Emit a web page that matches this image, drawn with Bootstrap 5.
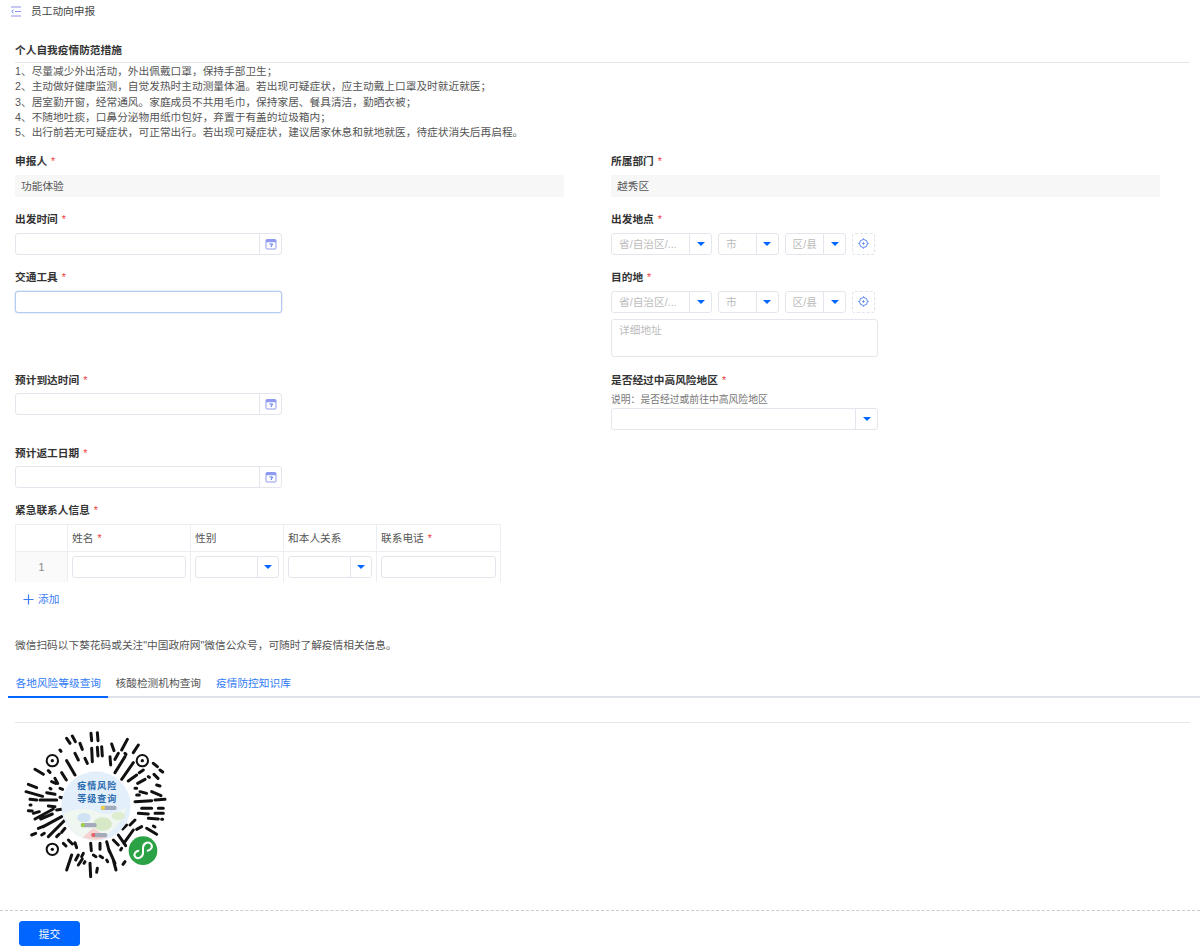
<!DOCTYPE html>
<html lang="zh-CN">
<head>
<meta charset="utf-8">
<title>员工动向申报</title>
<link rel="stylesheet" href="https://cdn.jsdelivr.net/npm/bootstrap@5.3.0/dist/css/bootstrap.min.css">
<style>
html,body{height:946px;overflow:hidden}
body{margin:0;background:#fff;color:#555;font-family:"Liberation Sans","Noto Sans CJK SC",sans-serif;font-size:10.7px;line-height:14px}
.top-bar{height:22px;padding:0 0 0 11px;color:#444;gap:10px}
.sheet{padding:0 10px 0 15px}
.sect-head{margin-top:21px;height:20px;line-height:14px;border-bottom:1px solid #e6e6e6;font-weight:700;color:#333}
.tips{margin:1px 0 0;line-height:15.3px}
.form-grid{width:1192px;margin-top:13.5px}
.fld{margin-bottom:15px}
.lbl{display:block;margin-bottom:7px;color:#333;font-weight:700;height:14px;line-height:15px}
.lbl i{font-style:normal;font-weight:400;color:#ee3f3f;margin-left:4px}
.lbl.tight{margin-bottom:6px}
.read-box{width:549px;height:22px;line-height:23px;padding:0 6px;background:#f7f7f7;color:#555}
.boxed{display:flex;align-items:stretch;height:22px;background:#fff;border:1px solid #e3e6ec;border-radius:3px;overflow:hidden}
.w267{width:267px}
.boxed .fill{flex:1;min-width:0;padding:0 7px;line-height:20px;color:#bbb;white-space:nowrap;overflow:hidden}
.boxed .tail{width:22px;flex:none;border-left:1px solid #e3e6ec;display:flex;align-items:center;justify-content:center}
.boxed.focus-box{border-color:#b6cbef;box-shadow:0 0 0 .5px #d5e2f8}
.caret-dn{width:0;height:0;border-left:4px solid transparent;border-right:4px solid transparent;border-top:4.5px solid #06f}
.area-row{gap:6px;width:267px}
.locate-box{width:23px;height:22px;border:1px dashed #dfe3ea;border-radius:3px;display:flex;align-items:center;justify-content:center}
.addr{width:267px;height:38px;margin:6px 0 1px;border:1px solid #e3e6ec;border-radius:3px;padding:3px 7px;color:#bbb}
.hint{height:14px;line-height:14px;margin-bottom:1px;font-size:9.8px;color:#777}
.after-grid{margin-top:1px}
.contact-tbl{width:485px;table-layout:fixed;border-collapse:collapse;margin:0;border-top:1px solid #e8eaf0}
.contact-tbl th,.contact-tbl td{border:1px solid #eceef3;border-bottom:0;padding:0;font-weight:400;color:#555;vertical-align:middle}
.contact-tbl th{height:27px;padding-left:4px;line-height:16px}
.contact-tbl td{height:31px;padding:0 4px}
.contact-tbl th:first-child,.contact-tbl td:first-child{padding:0;text-align:center;background:#fafafa;color:#888}
.contact-tbl th:first-child{background:#fff}
.contact-tbl i{font-style:normal;color:#ee3f3f;margin-left:4px}
.contact-tbl .boxed .tail{width:21px}
.add-link{margin:10px 0 0 8px;color:#3a7cf5;gap:4px;height:14px;line-height:16px}
.notice{margin-top:32px;color:#555;height:14px;line-height:14px}
.tab-strip{margin:16px -10px 0 -7px;border-bottom:2px solid #e0e2ea;height:30px}
.tab-strip .tab-it{padding:0 7.5px;line-height:30px;height:30px;color:#555}
.tab-strip .tab-it.on{color:#2f7bf6;border-bottom:2px solid #06f;width:100px;padding-right:0}
.tab-strip .tab-it.lnk{color:#2f7bf6}
.tab-rule{margin-top:24px;border-top:1px solid #e6e6e6;height:1px}
.qr-pic{display:block;margin-top:7px;width:160px;height:154px}
.foot-bar{margin-top:26px;border-top:1px dashed #ccc;padding:10px 0 0 19px}
.go-btn{width:61px;height:25px;padding:0;font-size:10.7px;line-height:25px;border-radius:3px;background:#06f;border-color:#06f}
</style>
</head>
<body>
<div class="top-bar d-flex align-items-center">
  <svg width="10" height="11" viewBox="0 0 10 11" fill="none" stroke="#8f90f0" stroke-width="1"><path d="M0 1h10M4 5.5h6M0 10h10"/><path d="M2.5 3.9.8 5.5l1.7 1.6" stroke="#4a7af5"/></svg>
  <span>员工动向申报</span>
</div>
<div class="sheet">
  <div class="sect-head">个人自我疫情防范措施</div>
  <p class="tips">1、尽量减少外出活动，外出佩戴口罩，保持手部卫生；<br>2、主动做好健康监测，自觉发热时主动测量体温。若出现可疑症状，应主动戴上口罩及时就近就医；<br>3、居室勤开窗，经常通风。家庭成员不共用毛巾，保持家居、餐具清洁，勤晒衣被；<br>4、不随地吐痰，口鼻分泌物用纸巾包好，弃置于有盖的垃圾箱内；<br>5、出行前若无可疑症状，可正常出行。若出现可疑症状，建议居家休息和就地就医，待症状消失后再启程。</p>

  <div class="row g-0 form-grid">
    <div class="col-6 fld"><span class="lbl">申报人<i>*</i></span><div class="read-box">功能体验</div></div>
    <div class="col-6 fld"><span class="lbl">所属部门<i>*</i></span><div class="read-box">越秀区</div></div>

    <div class="col-6 fld"><span class="lbl">出发时间<i>*</i></span>
      <div class="boxed w267"><div class="fill"></div><div class="tail"><svg width="12" height="12" viewBox="0 0 12 12" fill="none" stroke="#8f9bf0"><rect x="1" y="1.5" width="10" height="9.5" rx="1"/><path d="M1 3.2h10" stroke-width="2.2"/><path d="M4.5 6h3L6 9" stroke="#4a6fe0"/></svg></div></div>
    </div>
    <div class="col-6 fld"><span class="lbl">出发地点<i>*</i></span>
      <div class="d-flex area-row">
        <div class="boxed" style="width:101px"><div class="fill">省/自治区/...</div><div class="tail"><span class="caret-dn"></span></div></div>
        <div class="boxed" style="width:60.5px"><div class="fill">市</div><div class="tail"><span class="caret-dn"></span></div></div>
        <div class="boxed" style="width:61.5px"><div class="fill">区/县</div><div class="tail"><span class="caret-dn"></span></div></div>
        <div class="locate-box"><svg width="11" height="11" viewBox="0 0 11 11" fill="none" stroke="#5a86f2"><circle cx="5.5" cy="5.5" r="4"/><circle cx="5.5" cy="5.5" r=".7" fill="#2f6cf0"/><path d="M5.5 .3v1M5.5 9.7v1M.3 5.5h1M9.7 5.5h1"/></svg></div>
      </div>
    </div>

    <div class="col-6 fld"><span class="lbl">交通工具<i>*</i></span>
      <div class="boxed w267 focus-box"><div class="fill"></div></div>
    </div>
    <div class="col-6 fld"><span class="lbl">目的地<i>*</i></span>
      <div class="d-flex area-row">
        <div class="boxed" style="width:101px"><div class="fill">省/自治区/...</div><div class="tail"><span class="caret-dn"></span></div></div>
        <div class="boxed" style="width:60.5px"><div class="fill">市</div><div class="tail"><span class="caret-dn"></span></div></div>
        <div class="boxed" style="width:61.5px"><div class="fill">区/县</div><div class="tail"><span class="caret-dn"></span></div></div>
        <div class="locate-box"><svg width="11" height="11" viewBox="0 0 11 11" fill="none" stroke="#5a86f2"><circle cx="5.5" cy="5.5" r="4"/><circle cx="5.5" cy="5.5" r=".7" fill="#2f6cf0"/><path d="M5.5 .3v1M5.5 9.7v1M.3 5.5h1M9.7 5.5h1"/></svg></div>
      </div>
      <div class="addr">详细地址</div>
    </div>

    <div class="col-6 fld"><span class="lbl tight">预计到达时间<i>*</i></span>
      <div class="boxed w267"><div class="fill"></div><div class="tail"><svg width="12" height="12" viewBox="0 0 12 12" fill="none" stroke="#8f9bf0"><rect x="1" y="1.5" width="10" height="9.5" rx="1"/><path d="M1 3.2h10" stroke-width="2.2"/><path d="M4.5 6h3L6 9" stroke="#4a6fe0"/></svg></div></div>
    </div>
    <div class="col-6 fld"><span class="lbl tight">是否经过中高风险地区<i>*</i></span>
      <div class="hint">说明：是否经过或前往中高风险地区</div>
      <div class="boxed w267"><div class="fill"></div><div class="tail"><span class="caret-dn"></span></div></div>
    </div>
  </div>

  <div class="fld after-grid"><span class="lbl tight">预计返工日期<i>*</i></span>
    <div class="boxed w267"><div class="fill"></div><div class="tail"><svg width="12" height="12" viewBox="0 0 12 12" fill="none" stroke="#8f9bf0"><rect x="1" y="1.5" width="10" height="9.5" rx="1"/><path d="M1 3.2h10" stroke-width="2.2"/><path d="M4.5 6h3L6 9" stroke="#4a6fe0"/></svg></div></div>
  </div>

  <span class="lbl">紧急联系人信息<i>*</i></span>
  <table class="table contact-tbl">
    <colgroup><col style="width:52px"><col style="width:123px"><col style="width:93px"><col style="width:93px"><col style="width:124px"></colgroup>
    <thead><tr><th></th><th>姓名<i>*</i></th><th>性别</th><th>和本人关系</th><th>联系电话<i>*</i></th></tr></thead>
    <tbody><tr><td>1</td>
      <td><div class="boxed"><div class="fill"></div></div></td>
      <td><div class="boxed"><div class="fill"></div><div class="tail"><span class="caret-dn"></span></div></div></td>
      <td><div class="boxed"><div class="fill"></div><div class="tail"><span class="caret-dn"></span></div></div></td>
      <td><div class="boxed"><div class="fill"></div></div></td>
    </tr></tbody>
  </table>
  <div class="d-flex align-items-center add-link">
    <svg width="11" height="11" viewBox="0 0 11 11" stroke="#3a7cf5" stroke-width="1.2"><path d="M5.5 .5v10M.5 5.5h10"/></svg><span>添加</span>
  </div>

  <div class="notice">微信扫码以下葵花码或关注"中国政府网"微信公众号，可随时了解疫情相关信息。</div>

  <div class="d-flex tab-strip">
    <div class="tab-it on">各地风险等级查询</div>
    <div class="tab-it">核酸检测机构查询</div>
    <div class="tab-it lnk">疫情防控知识库</div>
  </div>
  <div class="tab-rule"></div>

  <svg class="qr-pic" viewBox="15 30 480 462">
    <g fill="none" stroke="#111" stroke-width="9" stroke-linecap="round">
      <path d="M243 40l2 22M262 38l2 24M170 55l10 15M187 48l9 17M210 70l7 18M245 85l2 40M262 82l2 26M275 80l2 28M305 72l7 20M352 58l-17 32M325 100l-10 18M385 75l-15 23M195 100l10 20M170 122l25 43M225 115l7 15M150 90l3 4M300 110l2 25M345 110l-30 48M370 128l-35 50M345 100l3 3"/>
      <path d="M75 148l25 15M115 152l5 5M125 185l12 5M135 175l8 15M155 158l14 22M430 130l12 10M450 150l8 6M432 163l12 12M380 165l-25 18M400 150l-12 8M405 178l-22 12M415 170l3 2"/>
      <path d="M48 215l50 14M55 193l25 10M60 238l20 2M110 218l25 5M120 205l3 2M150 205l8 3M55 272l12 1M90 240l50 0M115 258l20 2M150 232l10 2M60 255l3 0"/>
      <path d="M375 245l50-3M435 240l30-2M390 215l20 5M425 215l28 12M380 225l8 0M395 265l30 0M445 265l15 0M435 280l25 0M385 280l30 2M375 205l5 0M440 195l10 3M415 295l30 2M455 298l3 0"/>
      <path d="M70 280l18-5M75 297l55-30M92 297l35-15M100 320l55-30M115 350l50-50M65 345l12-5M85 325l15-6M95 345l8-5M140 270l20-3M140 350l8-8M165 325l-10 12"/>
      <path d="M375 300l-15 15M370 330l-25 35M395 320l-15 8M410 325l30 18M430 318l5 3M350 315l-12 12M325 345l22 32M310 360l15 15"/>
      <path d="M175 360l12 12M195 368l5 15M160 370l8 8M242 370l2 22M270 370l0 18M290 365l8 30M205 405l-8 15M220 400l-5 10M185 405l-15 45M205 435l12-18M240 430l2 40M262 445l-2 12M250 405l8 5M270 408l8 5M295 385l20 45M335 385l-3 5M310 420l8 30M345 425l-6 8M225 425l-3 5M290 420l3 5"/>
    </g>
    <g fill="none" stroke="#111">
      <circle cx="127" cy="122" r="17" stroke-width="6"/><circle cx="397" cy="122" r="17" stroke-width="6"/><circle cx="127" cy="388" r="17" stroke-width="6"/>
    </g>
    <g fill="#111"><circle cx="127" cy="122" r="5"/><circle cx="397" cy="122" r="5"/><circle cx="127" cy="388" r="5"/></g>
    <circle cx="258" cy="258" r="104" fill="#e3effa"/>
    <path d="M160 280q60-25 100-5t90-15q-20 70-92 102q-70 0-98-82z" fill="#f0f6f0"/>
    <ellipse cx="222" cy="293" rx="20" ry="14" fill="#cfe3f5"/>
    <ellipse cx="278" cy="312" rx="28" ry="20" fill="#d7e8c6"/>
    <ellipse cx="325" cy="288" rx="20" ry="12" fill="#deecd0"/>
    <path d="M218 352l32-28 42 28q-36 14-74 0z" fill="#f6d3d0"/>
    <rect x="272" y="257" width="48" height="13" rx="6" fill="#a3abba"/><circle cx="279" cy="263" r="6" fill="#f1d23c"/>
    <rect x="212" y="309" width="48" height="13" rx="6" fill="#a3abba"/><circle cx="219" cy="315" r="6" fill="#9ed23c"/>
    <rect x="244" y="339" width="48" height="13" rx="6" fill="#a3abba"/><circle cx="250" cy="345" r="6" fill="#ee5e5e"/>
    <text x="262" y="207" text-anchor="middle" letter-spacing="3" font-family="'Noto Sans CJK SC',sans-serif" font-weight="700" font-size="27" fill="#2b6cb0">疫情风险</text>
    <text x="262" y="247" text-anchor="middle" letter-spacing="3" font-family="'Noto Sans CJK SC',sans-serif" font-weight="700" font-size="27" fill="#2b6cb0">等级查询</text>
    <circle cx="399" cy="392" r="43" fill="#2ba245"/>
    <path d="M375 410c8 10 24 2 24-12v-14c0-14 16-22 24-12 7 9-1 18-10 20M385 392c-8 2-15 10-10 18" fill="none" stroke="#fff" stroke-width="6" stroke-linecap="round"/>
  </svg>
</div>
<div class="foot-bar"><button type="button" class="btn btn-primary go-btn">提交</button></div>
</body>
</html>
